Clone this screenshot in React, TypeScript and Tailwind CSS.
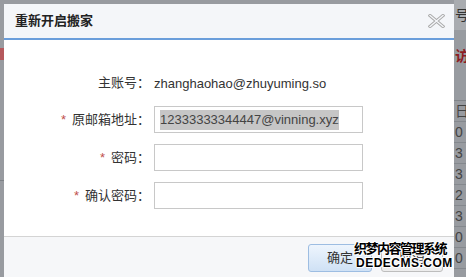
import React from "react";

const font = { fontFamily: '"Liberation Sans", "Noto Sans CJK SC", sans-serif' };

const bgRows = ["日", "0", "3", "3", "2", "3", "0", "0"];

function Field({
  label,
  required,
  children,
  className,
}: {
  label: string;
  required?: boolean;
  children: React.ReactNode;
  className?: string;
}) {
  return (
    <div className={"flex items-center " + (className ?? "")}>
      <div className="w-[146px] shrink-0 text-right text-[13px] text-[#333]">
        {required && <span className="mr-[6px] text-[#c0504d]">*</span>}
        {label}
      </div>
      <div className="ml-[4px]">{children}</div>
    </div>
  );
}

function CloseIcon() {
  return (
    <svg width="17" height="14" viewBox="0 0 17 14">
      <g strokeLinecap="square">
        <path d="M2 1.5 L15 12.5 M15 1.5 L2 12.5" stroke="#a9a9a9" strokeWidth="3.2" />
        <path d="M2 1.5 L15 12.5 M15 1.5 L2 12.5" stroke="#f4f6f9" strokeWidth="1.4" />
      </g>
    </svg>
  );
}

export default function App() {
  return (
    <div className="flex h-[277px] w-[466px] overflow-hidden bg-[#989ba0]" style={font}>
      {/* page behind, left edge */}
      <div className="flex w-[4px] shrink-0 flex-col">
        <div className="h-[48px]" />
        <div className="h-[12px] bg-[#b5585c]" />
        <div className="mt-[120px] h-[1px] bg-[#7d8186]" />
      </div>

      {/* dialog */}
      <div className="mt-[4px] flex w-[450px] shrink-0 flex-col overflow-hidden bg-white">
        <div className="flex h-[34px] items-center justify-between bg-[#f4f6f9] pl-[11px] pr-[9px]">
          <span className="text-[13px] font-bold text-[#222]">重新开启搬家</span>
          <CloseIcon />
        </div>
        <div className="h-[2px] bg-[#6a9edb]" />

        <div className="flex flex-col pt-[30px] pb-[27px]">
          <Field label="主账号：" className="h-[25px]">
            <span className="text-[13px] text-[#333]">zhanghaohao@zhuyuming.so</span>
          </Field>
          <Field label="原邮箱地址：" required className="mt-[11px]">
            <div className="flex h-[27px] w-[209px] items-center border border-[#c8c8c8] px-[5px]">
              <span className="bg-[#c6c6c6] text-[13px] leading-[20px] text-[#444]">
                12333333344447@vinning.xyz
              </span>
            </div>
          </Field>
          <Field label="密码：" required className="mt-[11px]">
            <div className="h-[27px] w-[209px] border border-[#c8c8c8]" />
          </Field>
          <Field label="确认密码：" required className="mt-[11px]">
            <div className="h-[27px] w-[209px] border border-[#c8c8c8]" />
          </Field>
        </div>

        <div className="relative flex flex-1 justify-end gap-[9px] border-t border-[#d4d4d4] bg-[#f6f7f9] pt-[7px] pr-[11px]">
          <button className="h-[28px] w-[64px] rounded-[3px] border border-[#9dbde2] bg-gradient-to-b from-[#eef5fd] to-[#cfe1f5] text-[13px] text-[#333]">
            确定
          </button>
          <button className="h-[28px] w-[62px] rounded-[3px] border border-[#bdbdbd] bg-gradient-to-b from-white to-[#ececec] text-[13px] text-[#333]">
            取消
          </button>
          <div className="absolute left-[350px] top-[5px] flex w-[96px] flex-col items-start leading-none text-black [text-shadow:1px_0_#fff,-1px_0_#fff,0_1px_#fff,0_-1px_#fff,1px_1px_#fff,-1px_-1px_#fff]">
            <span className="text-[13px] font-bold tracking-[-1.5px]">织梦内容管理系统</span>
            <span className="mt-[2px] pl-[2px] text-[12px] font-bold tracking-[0.5px]">DEDECMS.COM</span>
          </div>
        </div>
      </div>

      {/* page behind, right edge */}
      <div className="flex flex-1 flex-col overflow-hidden text-[14px] leading-none">
        <div className="flex h-[30px] items-center bg-[#a9acb0] pl-[1px] text-[#333]">号</div>
        <div className="mt-[19px] h-[14px] pl-[1px] font-bold text-[#8c1c22]">访</div>
        <div className="mt-[37px] border-t border-[#7f8388]">
          {bgRows.map((r, i) => (
            <div
              key={i}
              className="flex h-[21px] items-center border-b border-[#84888d] pl-[1px] text-[#444]"
            >
              {r}
            </div>
          ))}
        </div>
      </div>
    </div>
  );
}
